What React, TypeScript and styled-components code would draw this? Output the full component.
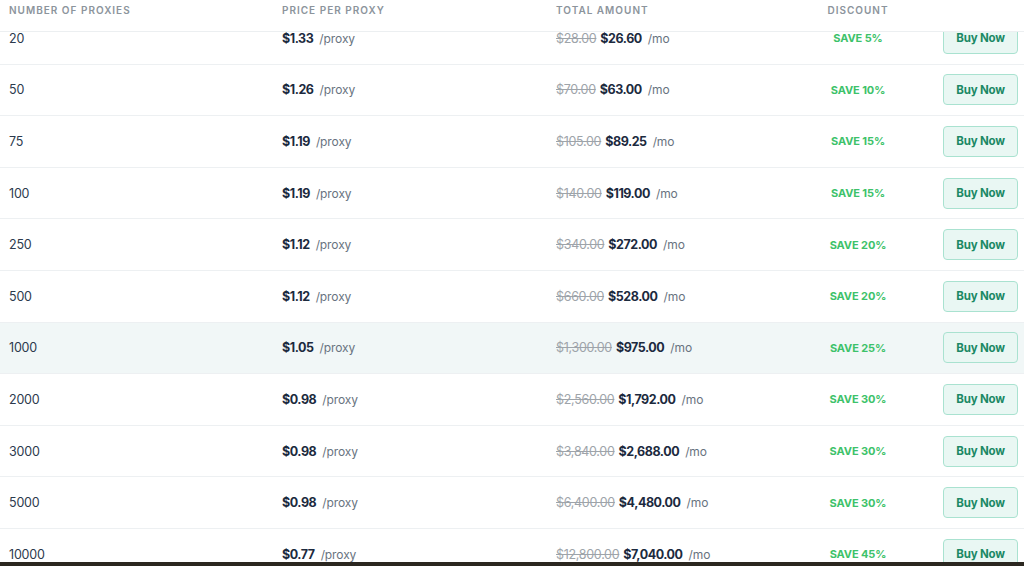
import React from 'react';
import styled, { createGlobalStyle } from 'styled-components';

const GlobalStyle = createGlobalStyle`
  html, body {
    margin: 0;
    padding: 0;
    background: #ffffff;
    overflow: hidden;
  }
  body {
    font-family: Inter, "Noto Sans", sans-serif;
  }
`;

const Page = styled.div`
  width: 1024px;
  height: 566px;
  display: flex;
  flex-direction: column;
  overflow: hidden;
`;

const Viewport = styled.div`
  flex: 1;
  overflow: hidden;
`;

const COLUMNS = '273px 274px 244px 116px 1fr';

const Header = styled.div`
  position: relative;
  z-index: 2;
  display: grid;
  grid-template-columns: ${COLUMNS};
  align-items: center;
  height: 32px;
  padding-left: 9px;
  background: #ffffff;
  border-bottom: 1px solid #eceff1;
  box-sizing: border-box;
`;

const HeadCell = styled.div<{ $center?: boolean }>`
  font-size: 10px;
  font-weight: 600;
  letter-spacing: 1px;
  color: #8c949c;
  text-transform: uppercase;
  text-align: ${(p) => (p.$center ? 'center' : 'left')};
  margin-top: -11px;
`;

const Body = styled.div`
  margin-top: -19px;
`;

const Row = styled.div<{ $active?: boolean }>`
  display: grid;
  grid-template-columns: ${COLUMNS};
  align-items: center;
  height: 51.6px;
  padding-left: 9px;
  box-sizing: border-box;
  border-bottom: 1px solid #edf0f2;
  background: ${(p) => (p.$active ? '#f1f7f7' : '#ffffff')};
`;

const Count = styled.div`
  font-size: 12.5px;
  color: #2c3a4d;
  letter-spacing: -0.2px;
`;

const Price = styled.div`
  display: flex;
  align-items: baseline;
  gap: 4px;
`;

const Strong = styled.span`
  font-size: 12.5px;
  font-weight: 700;
  color: #1c2a3e;
  letter-spacing: -0.45px;
`;

const Unit = styled.span`
  font-size: 12px;
  color: #687380;
  margin-left: 2px;
  letter-spacing: -0.1px;
`;

const Old = styled.span`
  font-size: 12.5px;
  color: #9ea4aa;
  text-decoration: line-through;
  letter-spacing: -0.3px;
`;

const Save = styled.div`
  text-align: center;
  font-size: 11px;
  font-weight: 700;
  color: #3dc26a;
  letter-spacing: -0.1px;
`;

const ButtonCell = styled.div`
  display: flex;
  justify-content: flex-end;
  padding-right: 6px;
`;

const BuyButton = styled.button`
  width: 75px;
  height: 31px;
  border: 1px solid #a9e2d0;
  border-radius: 4px;
  background: #e9f7f3;
  color: #1b8965;
  font-family: Inter, "Noto Sans", sans-serif;
  font-size: 11.5px;
  font-weight: 700;
  letter-spacing: -0.2px;
  cursor: pointer;
`;

const BottomBar = styled.div`
  height: 4px;
  background: #2b2720;
`;

const rows = [
  { n: '20', unit: '$1.33', old: '$28.00', total: '$26.60', save: '5%' },
  { n: '50', unit: '$1.26', old: '$70.00', total: '$63.00', save: '10%' },
  { n: '75', unit: '$1.19', old: '$105.00', total: '$89.25', save: '15%' },
  { n: '100', unit: '$1.19', old: '$140.00', total: '$119.00', save: '15%' },
  { n: '250', unit: '$1.12', old: '$340.00', total: '$272.00', save: '20%' },
  { n: '500', unit: '$1.12', old: '$660.00', total: '$528.00', save: '20%' },
  { n: '1000', unit: '$1.05', old: '$1,300.00', total: '$975.00', save: '25%', active: true },
  { n: '2000', unit: '$0.98', old: '$2,560.00', total: '$1,792.00', save: '30%' },
  { n: '3000', unit: '$0.98', old: '$3,840.00', total: '$2,688.00', save: '30%' },
  { n: '5000', unit: '$0.98', old: '$6,400.00', total: '$4,480.00', save: '30%' },
  { n: '10000', unit: '$0.77', old: '$12,800.00', total: '$7,040.00', save: '45%' },
];

const App: React.FC = () => {
  return (
    <Page>
      <GlobalStyle />
      <Viewport>
        <Header>
          <HeadCell>Number of proxies</HeadCell>
          <HeadCell>Price per proxy</HeadCell>
          <HeadCell>Total amount</HeadCell>
          <HeadCell $center>Discount</HeadCell>
          <div />
        </Header>
        <Body>
          {rows.map((r) => (
            <Row key={r.n} $active={r.active}>
              <Count>{r.n}</Count>
              <Price>
                <Strong>{r.unit}</Strong>
                <Unit>/proxy</Unit>
              </Price>
              <Price>
                <Old>{r.old}</Old>
                <Strong>{r.total}</Strong>
                <Unit>/mo</Unit>
              </Price>
              <Save>SAVE {r.save}</Save>
              <ButtonCell>
                <BuyButton>Buy Now</BuyButton>
              </ButtonCell>
            </Row>
          ))}
        </Body>
      </Viewport>
      <BottomBar />
    </Page>
  );
};

export default App;
